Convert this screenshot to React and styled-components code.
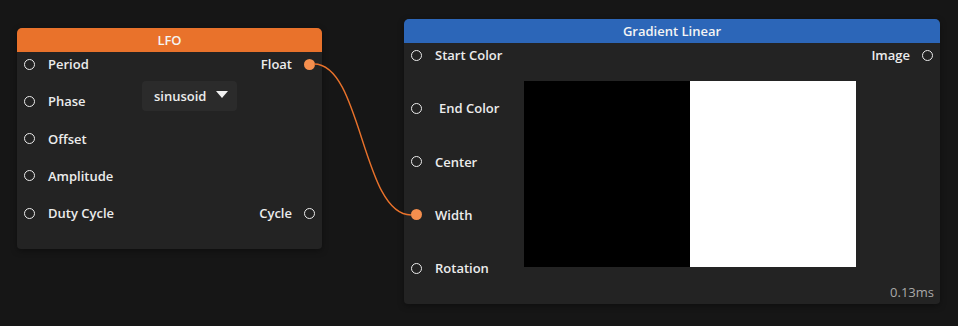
import React from 'react';
import styled, { createGlobalStyle } from 'styled-components';

const GlobalStyle = createGlobalStyle`
    html, body {
        margin: 0;
        padding: 0;
        background: #161616;
    }
    body {
        font-family: "Open Sans", "Noto Sans", sans-serif;
        color: #e8e8e8;
    }
`;

const Canvas = styled.div`
    position: relative;
    width: 958px;
    height: 326px;
    overflow: hidden;
    background: #161616;
`;

const Node = styled.div`
    position: absolute;
    left: ${(p) => p.x}px;
    top: ${(p) => p.y}px;
    width: ${(p) => p.w}px;
    display: flex;
    flex-flow: column;
    background: #232323;
    border-radius: 5px 5px 4px 4px;
    box-shadow: 0 2px 6px rgba(0, 0, 0, 0.35);
`;

const Header = styled.div`
    height: 24px;
    line-height: 24px;
    text-align: center;
    font-size: 13px;
    font-weight: 600;
    color: #f4f4f4;
    background: ${(p) => p.color};
    border-radius: 5px 5px 0 0;
`;

const Body = styled.div`
    display: flex;
    flex-flow: row;
    padding-bottom: ${(p) => p.bottom || 0}px;
`;

const Column = styled.div`
    display: flex;
    flex-flow: column;
    gap: ${(p) => p.gap}px;
    justify-content: ${(p) => p.spread ? 'space-between' : 'flex-start'};
    align-items: ${(p) => p.right ? 'flex-end' : 'flex-start'};
    width: ${(p) => p.w ? `${p.w}px` : 'auto'};
    flex: ${(p) => p.grow ? 1 : '0 0 auto'};
`;

const Row = styled.div`
    display: flex;
    align-items: center;
    height: 24px;
    gap: ${(p) => p.gap || 13}px;
    padding: 0 7px 0 7px;
    font-size: 13px;
    font-weight: 600;
    color: #ececec;
    white-space: nowrap;
`;

const Port = styled.span`
    box-sizing: border-box;
    width: 11px;
    height: 11px;
    border-radius: 50%;
    border: ${(p) => p.active ? 'none' : '1.8px solid #ececec'};
    background: ${(p) => p.active ? '#f58f4e' : 'transparent'};
    flex: 0 0 auto;
`;

const Label = styled.span`
    padding-left: ${(p) => p.indent || 0}px;
`;

const Select = styled.div`
    margin: 29px 0 0 ${(p) => p.left}px;
    width: 95px;
    height: 30px;
    box-sizing: border-box;
    padding: 0 9px 0 12px;
    display: flex;
    align-items: center;
    justify-content: space-between;
    background: #2b2b2b;
    border-radius: 4px;
    font-size: 13px;
    font-weight: 600;
    color: #ececec;
`;

const Caret = styled.span`
    width: 0;
    height: 0;
    border-left: 6px solid transparent;
    border-right: 6px solid transparent;
    border-top: 7px solid #f2f2f2;
    margin-bottom: 3px;
`;

const Preview = styled.div`
    margin-top: 38px;
    width: 332px;
    height: 186px;
    flex: 0 0 auto;
    background: linear-gradient(to right, #000 50%, #fff 50%);
`;

const Footer = styled.div`
    height: 24px;
    line-height: 24px;
    padding-right: 6px;
    text-align: right;
    font-size: 13px;
    color: #a9a9a9;
`;

const Wires = styled.svg`
    position: absolute;
    left: 0;
    top: 0;
    pointer-events: none;
`;

const InputRow = ({ label, active, indent }) => (
    <Row>
        <Port active={active}/>
        <Label indent={indent}>{label}</Label>
    </Row>
);

const OutputRow = ({ label, active }) => (
    <Row gap={12}>
        <Label>{label}</Label>
        <Port active={active}/>
    </Row>
);

const App = () => {
    return (
        <Canvas>
            <GlobalStyle/>

            <Node x={17} y={28} w={305}>
                <Header color={'#e9722b'}>LFO</Header>
                <Body bottom={24}>
                    <Column gap={13.25} w={110}>
                        <InputRow label={'Period'}/>
                        <InputRow label={'Phase'}/>
                        <InputRow label={'Offset'}/>
                        <InputRow label={'Amplitude'}/>
                        <InputRow label={'Duty Cycle'}/>
                    </Column>
                    <Column grow>
                        <Select left={15}>
                            <span>sinusoid</span>
                            <Caret/>
                        </Select>
                    </Column>
                    <Column right spread>
                        <OutputRow label={'Float'} active/>
                        <OutputRow label={'Cycle'}/>
                    </Column>
                </Body>
            </Node>

            <Node x={404} y={19} w={536}>
                <Header color={'#2c66b8'}>Gradient Linear</Header>
                <Body>
                    <Column gap={29.25} w={120}>
                        <InputRow label={'Start Color'}/>
                        <InputRow label={'End Color'} indent={4}/>
                        <InputRow label={'Center'}/>
                        <InputRow label={'Width'} active/>
                        <InputRow label={'Rotation'}/>
                    </Column>
                    <Preview/>
                    <Column right grow>
                        <OutputRow label={'Image'}/>
                    </Column>
                </Body>
                <Footer>0.13ms</Footer>
            </Node>

            <Wires width={958} height={326}>
                <path
                    d="M 314 64 C 362 64, 362 215, 411 215"
                    fill="none"
                    stroke="#e9722b"
                    strokeWidth="1.4"
                />
            </Wires>
        </Canvas>
    );
};

export default App;
